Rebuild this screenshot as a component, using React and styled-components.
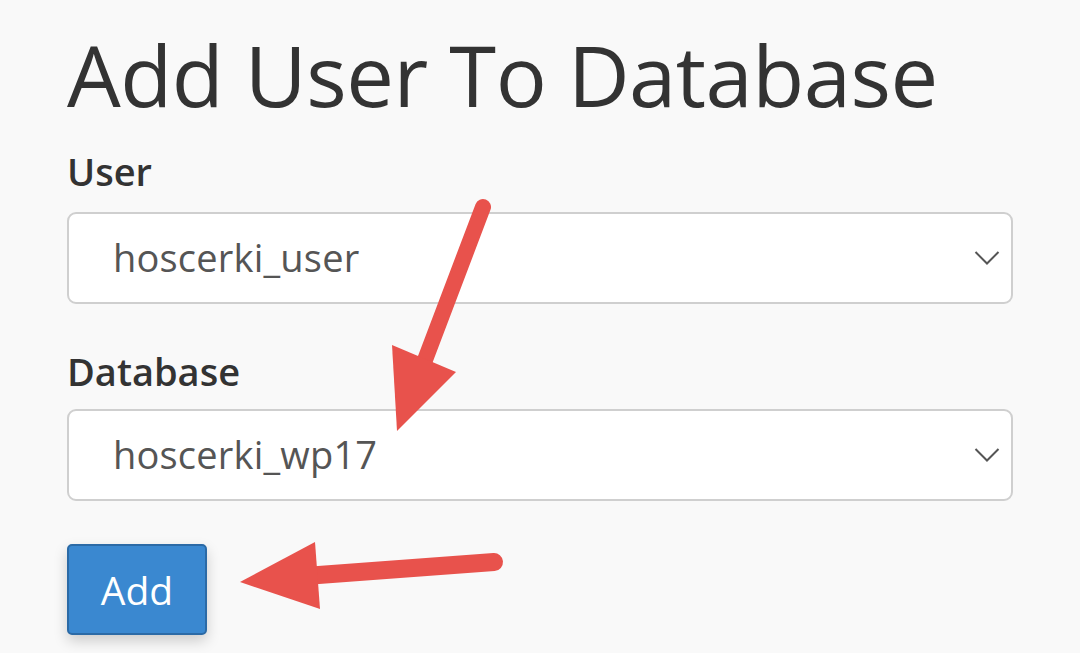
import React from 'react';
import styled, { createGlobalStyle } from 'styled-components';

const GlobalStyle = createGlobalStyle`
  html, body {
    margin: 0;
    padding: 0;
    background: #f9f9f9;
    font-family: "Open Sans", "Liberation Sans", sans-serif;
  }
`;

const Page = styled.div`
  position: relative;
  width: 1080px;
  height: 653px;
  overflow: hidden;
  background: #f9f9f9;
  box-sizing: border-box;
  padding: 23px 67px 0 67px;
  display: flex;
  flex-direction: column;
`;

const Title = styled.h1`
  margin: 0;
  font-size: 85px;
  line-height: 1.2;
  font-weight: 400;
  color: #333;
  letter-spacing: -0.5px;
`;

const Field = styled.div`
  display: flex;
  flex-direction: column;
  gap: ${(p) => p.gap}px;
  margin-top: ${(p) => p.top}px;
`;

const Label = styled.label`
  font-size: 38px;
  line-height: 1.2;
  font-weight: 600;
  color: #333;
`;

const SelectBox = styled.div`
  box-sizing: border-box;
  width: 946px;
  height: 92px;
  background: #fff;
  border: 2px solid #cfcfcf;
  border-radius: 9px;
  padding: 0 10px 0 44px;
  display: flex;
  align-items: center;
  justify-content: space-between;
`;

const SelectText = styled.span`
  font-size: 38px;
  line-height: 1.2;
  color: #555;
  letter-spacing: 0.2px;
`;

const Button = styled.button`
  margin-top: 43px;
  box-sizing: border-box;
  width: 140px;
  height: 91px;
  background: #3a88d0;
  border: 2px solid #2b6aa6;
  border-radius: 5px;
  color: #fff;
  font-family: inherit;
  font-size: 39px;
  line-height: 1;
  padding: 0;
  box-shadow: 0 6px 14px rgba(0, 0, 0, 0.18);
  cursor: pointer;
`;

const Overlay = styled.svg`
  position: absolute;
  left: 0;
  top: 0;
  pointer-events: none;
`;

const Chevron = () => (
  <svg width="28" height="16" viewBox="0 0 28 16">
    <path d="M2.5 2 L14 13.5 L25.5 2" fill="none" stroke="#555" strokeWidth="2" />
  </svg>
);

const Select = ({ value }) => (
  <SelectBox>
    <SelectText>{value}</SelectText>
    <Chevron />
  </SelectBox>
);

const ARROW = '#e8524c';

const App = () => {
  return (
    <Page>
      <GlobalStyle />
      <Title>Add User To Database</Title>

      <Field top={24} gap={17}>
        <Label>User</Label>
        <Select value="hoscerki_user" />
      </Field>

      <Field top={45} gap={15}>
        <Label>Database</Label>
        <Select value="hoscerki_wp17" />
      </Field>

      <Button type="button">Add</Button>

      <Overlay width="1080" height="653" viewBox="0 0 1080 653">
        <line x1="483" y1="207" x2="425" y2="360" stroke={ARROW} strokeWidth="16" strokeLinecap="round" />
        <polygon points="392,345 456,372 397,431" fill={ARROW} />
        <line x1="494" y1="562" x2="305" y2="576" stroke={ARROW} strokeWidth="18" strokeLinecap="round" />
        <polygon points="315,542 320,609 240,582" fill={ARROW} />
      </Overlay>
    </Page>
  );
};

export default App;
